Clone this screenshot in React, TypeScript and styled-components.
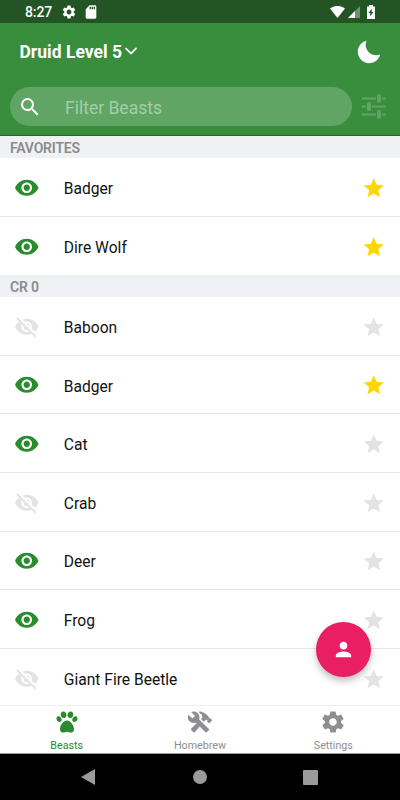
import React from 'react';
import styled, { createGlobalStyle } from 'styled-components';
import { IoMdStar, IoMdMoon, IoIosArrowDown, IoMdPaw, IoMdConstruct, IoMdSettings } from 'react-icons/io';
import { MdVisibility, MdVisibilityOff, MdPerson, MdSearch, MdSettings, MdSdCard } from 'react-icons/md';

const GlobalStyle = createGlobalStyle`
  * { box-sizing: border-box; }
  body { margin: 0; background: #fff; font-family: Roboto, sans-serif; }
  svg { display: block; flex: none; }
`;

const Screen = styled.div`
  width: 400px;
  height: 800px;
  display: flex;
  flex-direction: column;
  overflow: hidden;
  position: relative;
`;

const StatusBar = styled.div`
  height: 23px;
  flex: none;
  padding: 1px 25px 0;
  display: flex;
  align-items: center;
  justify-content: space-between;
  background: #225424;
  color: #fff;
`;

const StatusGroup = styled.div<{ $gap: number }>`
  display: flex;
  align-items: center;
  gap: ${(p) => p.$gap}px;
`;

const Clock = styled.span`
  font-size: 14px;
  line-height: 22px;
  font-weight: 500;
  letter-spacing: -0.1px;
  margin-right: 3px;
`;

const Header = styled.header`
  height: 113px;
  flex: none;
  background: #388e3c;
  border-bottom: 1px solid #0b7a10;
  color: #fff;
`;

const TitleRow = styled.div`
  height: 57px;
  padding: 0 17px 0 19.5px;
  display: flex;
  align-items: center;
  justify-content: space-between;
`;

const Title = styled.h1`
  margin: 0;
  display: flex;
  align-items: center;
  font-size: 17.5px;
  font-weight: 700;
  line-height: 24px;
  & > svg { margin-top: -2px; }
`;

const SearchRow = styled.div`
  padding: 7px 14px 0 10px;
  display: flex;
  align-items: center;
  justify-content: space-between;
`;

const SearchField = styled.div`
  width: 342px;
  height: 39px;
  border-radius: 20px;
  padding-left: 8px;
  display: flex;
  align-items: center;
  gap: 23px;
  background: #60a563;
`;

const Placeholder = styled.span`
  font-size: 17.5px;
  color: #a6cda8;
  padding-top: 2px;
`;

const List = styled.main`
  flex: 1;
  min-height: 0;
  overflow: hidden;
`;

const SectionHeader = styled.h2`
  margin: 0;
  height: 22px;
  padding: 1px 10px 0;
  font-size: 14px;
  line-height: 23px;
  font-weight: 600;
  letter-spacing: -0.2px;
  color: #8b8b8b;
  background: #f0f1f5;
`;

const Row = styled.div`
  height: 58.6px;
  padding: 1px 13.5px 0 14px;
  display: flex;
  align-items: center;
  border-bottom: 1px solid #e8e8e8;
  &:last-child { border-bottom: 0; }
`;

const Name = styled.span`
  flex: 1;
  margin-left: 24.3px;
  padding-top: 3px;
  font-size: 15.6px;
  line-height: 20px;
  color: #111;
`;

const Fab = styled.button`
  position: absolute;
  left: 316px;
  top: 622px;
  width: 55px;
  height: 55px;
  padding: 0;
  border: 0;
  border-radius: 50%;
  display: grid;
  place-items: center;
  color: #fff;
  background: #e91e63;
  box-shadow: 0 4px 7px rgba(0, 0, 0, 0.25);
`;

const TabBar = styled.nav`
  height: 49px;
  flex: none;
  display: grid;
  grid-template-columns: repeat(3, 1fr);
  background: #fff;
  border-top: 1px solid #ededed;
  border-bottom: 1px solid #999;
`;

const Tab = styled.div<{ $active?: boolean }>`
  display: flex;
  flex-direction: column;
  align-items: center;
  padding-top: 3px;
  color: ${(p) => (p.$active ? '#2a8a2e' : '#8e8e93')};
`;

const TabLabel = styled.span`
  font-size: 10.7px;
  line-height: 14px;
  margin-top: 4px;
`;

const NavBar = styled.div`
  height: 46px;
  flex: none;
  background: #000;
  color: #9b9b9b;
  display: grid;
  grid-template-columns: 176px 47px 175px;
  place-items: center;
`;

type Beast = { name: string; eye: boolean; star: boolean };

const favorites: Beast[] = [
  { name: 'Badger', eye: true, star: true },
  { name: 'Dire Wolf', eye: true, star: true },
];

const crZero: Beast[] = [
  { name: 'Baboon', eye: false, star: false },
  { name: 'Badger', eye: true, star: true },
  { name: 'Cat', eye: true, star: false },
  { name: 'Crab', eye: false, star: false },
  { name: 'Deer', eye: true, star: false },
  { name: 'Frog', eye: true, star: false },
  { name: 'Giant Fire Beetle', eye: false, star: false },
];

function Section({ title, beasts }: { title: string; beasts: Beast[] }) {
  return (
    <section>
      <SectionHeader>{title}</SectionHeader>
      {beasts.map((b) => (
        <Row key={b.name}>
          {b.eye ? <MdVisibility size={25.5} color="#2a8c2e" /> : <MdVisibilityOff size={25.5} color="#e3e3e3" />}
          <Name>{b.name}</Name>
          <IoMdStar size={25.5} color={b.star ? '#ffd600' : '#e3e3e3'} />
        </Row>
      ))}
    </section>
  );
}

function SlidersIcon() {
  return (
    <svg width="24" height="25" viewBox="0 0 24 25" fill="#60a563">
      <path d="M0 3.500h14v2H0zM20 3.500h4v2h-4zM0 11.500h4v2H0zM10 11.500h14v2H10zM0 19.500h14v2H0zM20 19.500h4v2h-4z" />
      <rect x="15" y="0" width="4" height="9" rx="1.700" />
      <rect x="5" y="8" width="4" height="9" rx="1.700" />
      <rect x="15" y="16" width="4" height="9" rx="1.700" />
    </svg>
  );
}

export default function App() {
  return (
    <Screen>
      <GlobalStyle />
      <StatusBar>
        <StatusGroup $gap={6}>
          <Clock>8:27</Clock>
          <MdSettings size={16} />
          <MdSdCard size={16} />
        </StatusGroup>
        <StatusGroup $gap={3}>
          <svg width="15" height="12" viewBox="0 0 15 12">
            <path d="M0 2.6C4.4-.9 10.600-.9 15 2.600L7.500 12z" fill="currentColor" />
          </svg>
          <svg width="12" height="12" viewBox="0 0 12 12">
            <path d="M12 0V12H0z" fill="currentColor" opacity="0.35" />
            <path d="M7 5V12H0z" fill="currentColor" />
          </svg>
          <svg width="12" height="14" viewBox="0 0 12 14">
            <path d="M6 0h4v1.500h2V14H4V1.500h2z" fill="currentColor" />
            <path d="M8.600 3.500 5.600 8h1.700v3.500l3-4.500H8.600z" fill="#225424" />
          </svg>
        </StatusGroup>
      </StatusBar>
      <Header>
        <TitleRow>
          <Title>
            Druid Level 5
            <IoIosArrowDown size={18} />
          </Title>
          <IoMdMoon size={28} />
        </TitleRow>
        <SearchRow>
          <SearchField>
            <MdSearch size={24} />
            <Placeholder>Filter Beasts</Placeholder>
          </SearchField>
          <SlidersIcon />
        </SearchRow>
      </Header>
      <List>
        <Section title="FAVORITES" beasts={favorites} />
        <Section title="CR 0" beasts={crZero} />
      </List>
      <TabBar>
        <Tab $active>
          <IoMdPaw size={26} />
          <TabLabel>Beasts</TabLabel>
        </Tab>
        <Tab>
          <IoMdConstruct size={26} />
          <TabLabel>Homebrew</TabLabel>
        </Tab>
        <Tab>
          <IoMdSettings size={26} />
          <TabLabel>Settings</TabLabel>
        </Tab>
      </TabBar>
      <NavBar>
        <svg width="14" height="16" viewBox="0 0 14 16">
          <path d="M14 0V16L0 8z" fill="currentColor" />
        </svg>
        <svg width="14" height="14" viewBox="0 0 14 14">
          <circle cx="7" cy="7" r="7" fill="currentColor" />
        </svg>
        <svg width="15" height="15" viewBox="0 0 15 15">
          <rect width="15" height="15" rx="1" fill="currentColor" />
        </svg>
      </NavBar>
      <Fab aria-label="Profile">
        <MdPerson size={23} />
      </Fab>
    </Screen>
  );
}
